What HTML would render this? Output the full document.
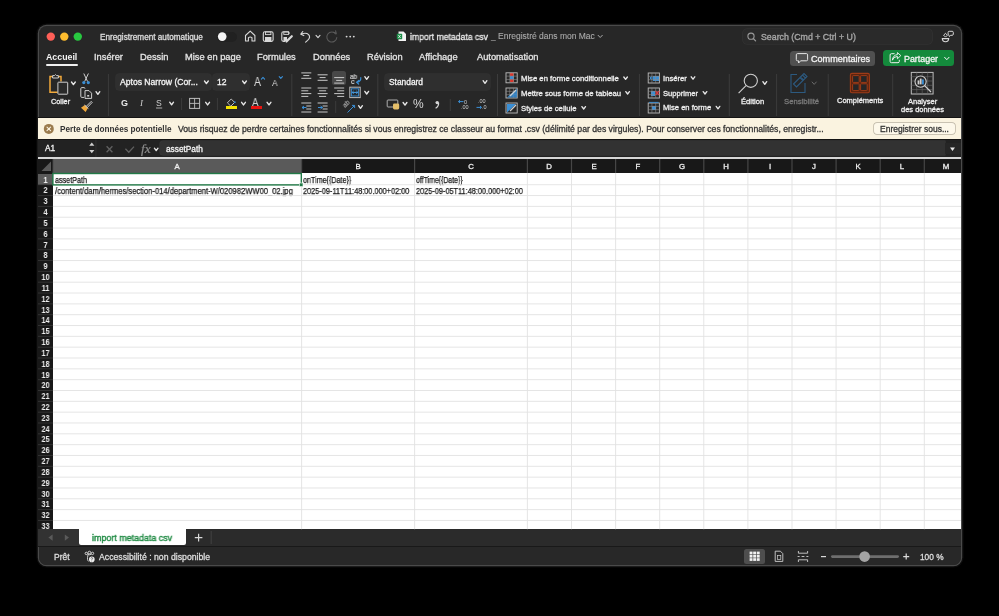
<!DOCTYPE html>
<html><head><meta charset="utf-8"><style>
html,body{margin:0;padding:0;background:#000;width:999px;height:616px;overflow:hidden;}
body{position:relative;font-family:"Liberation Sans", sans-serif;}
.t{position:absolute;white-space:nowrap;line-height:1;will-change:transform;}
.r{position:absolute;}
svg{position:absolute;left:0;top:0;}
</style></head><body>
<div class="r" style="left:38.6px;top:26px;width:922.2px;height:538.8px;background:#272727;border-radius:7.5px;box-shadow:0 0 0 1.2px #4a4a4a, 0 0 0 2.6px #0c0c0c;"></div>
<div class="t" style="left:100.00px;top:34.00px;font-size:8.2px;color:#dedede;font-weight:400;-webkit-text-stroke:0.3px #dedede;">Enregistrement automatique</div>
<div class="r" style="left:217px;top:31.6px;width:20px;height:10px;border-radius:5px;background:#212121"></div>
<div class="t" style="left:409.80px;top:33.00px;font-size:9.0px;color:#ececec;font-weight:400;transform:scaleX(0.9623689080814313);transform-origin:0 0;-webkit-text-stroke:0.3px #ececec;">import metadata csv</div>
<div class="t" style="left:490.50px;top:32.00px;font-size:8.5px;color:#aaaaaa;font-weight:400;">_</div>
<div class="t" style="left:498.00px;top:32.00px;font-size:8.5px;color:#ababab;font-weight:400;-webkit-text-stroke:0.1px #ababab;">Enregistré dans mon Mac</div>
<div class="r" style="left:743px;top:29px;width:189px;height:14.5px;border-radius:4px;background:#2a2a2a;box-shadow:0 0 0 0.6px #363636"></div>
<div class="t" style="left:761.00px;top:33.00px;font-size:8.8px;color:#a6a6a6;font-weight:400;-webkit-text-stroke:0.35px #a6a6a6;">Search (Cmd + Ctrl + U)</div>
<div class="t" style="left:46.00px;top:53.00px;font-size:8.8px;color:#f2f2f2;font-weight:700;">Accueil</div>
<div class="r" style="left:45.5px;top:64px;width:32.5px;height:2.2px;border-radius:1.1px;background:#f0f0f0"></div>
<div class="t" style="left:93.60px;top:53.00px;font-size:9.3px;color:#e4e4e4;font-weight:400;-webkit-text-stroke:0.3px #e4e4e4;">Insérer</div>
<div class="t" style="left:140.00px;top:53.00px;font-size:9.3px;color:#e4e4e4;font-weight:400;-webkit-text-stroke:0.3px #e4e4e4;">Dessin</div>
<div class="t" style="left:184.50px;top:53.00px;font-size:9.3px;color:#e4e4e4;font-weight:400;-webkit-text-stroke:0.3px #e4e4e4;">Mise en page</div>
<div class="t" style="left:257.20px;top:53.00px;font-size:9.3px;color:#e4e4e4;font-weight:400;-webkit-text-stroke:0.3px #e4e4e4;">Formules</div>
<div class="t" style="left:313.20px;top:53.00px;font-size:9.3px;color:#e4e4e4;font-weight:400;-webkit-text-stroke:0.3px #e4e4e4;">Données</div>
<div class="t" style="left:366.80px;top:53.00px;font-size:9.3px;color:#e4e4e4;font-weight:400;-webkit-text-stroke:0.3px #e4e4e4;">Révision</div>
<div class="t" style="left:418.70px;top:53.00px;font-size:9.3px;color:#e4e4e4;font-weight:400;-webkit-text-stroke:0.3px #e4e4e4;">Affichage</div>
<div class="t" style="left:477.30px;top:53.00px;font-size:9.3px;color:#e4e4e4;font-weight:400;-webkit-text-stroke:0.3px #e4e4e4;">Automatisation</div>
<div class="r" style="left:790px;top:50.5px;width:85.3px;height:15.5px;border-radius:3.5px;background:#505050"></div>
<div class="t" style="left:811.00px;top:55.00px;font-size:9.1px;color:#f4f4f4;font-weight:400;-webkit-text-stroke:0.3px #f4f4f4;">Commentaires</div>
<div class="r" style="left:883px;top:50.3px;width:71.4px;height:16px;border-radius:3.5px;background:#148a3c"></div>
<div class="t" style="left:903.90px;top:55.00px;font-size:8.9px;color:#f4f4f4;font-weight:400;-webkit-text-stroke:0.3px #f4f4f4;">Partager</div>
<div class="r" style="left:38px;top:116.6px;width:923px;height:1.8px;background:#141414;"></div>
<div class="t" style="left:51.00px;top:98.00px;font-size:7.3px;color:#efefef;font-weight:400;-webkit-text-stroke:0.3px #efefef;">Coller</div>
<div class="r" style="left:116px;top:73.7px;width:95px;height:16.5px;border-radius:3px;background:#2f2f2f;box-shadow:0 0 0 0.5px #363636"></div>
<div class="t" style="left:119.90px;top:78.00px;font-size:8.6px;color:#f4f4f4;font-weight:400;-webkit-text-stroke:0.3px #f4f4f4;">Aptos Narrow (Cor...</div>
<div class="r" style="left:213.4px;top:73.7px;width:35.8px;height:16.5px;border-radius:3px;background:#2f2f2f;box-shadow:0 0 0 0.5px #363636"></div>
<div class="t" style="left:216.70px;top:78.00px;font-size:8.6px;color:#f4f4f4;font-weight:400;-webkit-text-stroke:0.3px #f4f4f4;">12</div>
<div class="t" style="left:253.80px;top:76.00px;font-size:12.3px;color:#d8d8d8;font-weight:400;transform:scaleX(0.85);transform-origin:0 0;">A</div>
<div class="t" style="left:272.20px;top:79.00px;font-size:9.3px;color:#d8d8d8;font-weight:400;transform:scaleX(0.9);transform-origin:0 0;">A</div>
<div class="t" style="left:120.60px;top:99.00px;font-size:9px;color:#e8e8e8;font-weight:700;">G</div>
<div class="t" style="left:139.80px;top:99.00px;font-size:9px;color:#cfcfcf;font-weight:400;font-family:'Liberation Serif',serif;font-style:italic;">I</div>
<div class="t" style="left:156.30px;top:99.00px;font-size:8.6px;color:#cfcfcf;font-weight:400;">S</div>
<div class="r" style="left:225.8px;top:106.3px;width:11px;height:2.6px;background:#f5e400;"></div>
<div class="t" style="left:251.80px;top:97.00px;font-size:11.5px;color:#cfcfcf;font-weight:400;transform:scaleX(0.85);transform-origin:0 0;">A</div>
<div class="r" style="left:251.2px;top:106.3px;width:11px;height:2.6px;background:#e8130f;"></div>
<div class="r" style="left:332px;top:71px;width:14px;height:13.5px;border-radius:2.5px;background:#484848"></div>
<div class="t" style="left:350.40px;top:73.00px;font-size:7.2px;color:#cfcfcf;font-weight:400;transform:scaleX(0.9);transform-origin:0 0;-webkit-text-stroke:0.2px #cfcfcf;">ab</div>
<div class="t" style="left:350.60px;top:78.00px;font-size:7.2px;color:#cfcfcf;font-weight:400;-webkit-text-stroke:0.2px #cfcfcf;">c</div>
<div class="t" style="left:342.5px;top:101px;font-size:6.5px;color:#cfcfcf;transform:rotate(-45deg);transform-origin:50% 50%">ab</div>
<div class="r" style="left:385px;top:73.5px;width:105px;height:16.3px;border-radius:3px;background:#2f2f2f;box-shadow:0 0 0 0.5px #363636"></div>
<div class="t" style="left:389.00px;top:78.00px;font-size:8.4px;color:#f4f4f4;font-weight:400;-webkit-text-stroke:0.3px #f4f4f4;">Standard</div>
<div class="t" style="left:413.00px;top:98.00px;font-size:12px;color:#d8d8d8;font-weight:400;">%</div>
<div class="t" style="left:464.30px;top:100.00px;font-size:5.5px;color:#cfcfcf;font-weight:400;">0</div>
<div class="t" style="left:461.00px;top:105.00px;font-size:5.5px;color:#cfcfcf;font-weight:400;">.00</div>
<div class="t" style="left:478.00px;top:99.00px;font-size:5.5px;color:#cfcfcf;font-weight:400;">.00</div>
<div class="t" style="left:482.30px;top:105.00px;font-size:5.5px;color:#cfcfcf;font-weight:400;">.0</div>
<div class="r" style="left:509.6px;top:73.4px;width:4px;height:2.8px;background:#d9342b;"></div>
<div class="r" style="left:509.6px;top:79.4px;width:4px;height:2.8px;background:#d9342b;"></div>
<div class="r" style="left:509.6px;top:76.4px;width:4px;height:3px;background:#3a8fd6;"></div>
<div class="t" style="left:521.30px;top:75.00px;font-size:7.7px;color:#efefef;font-weight:400;-webkit-text-stroke:0.3px #efefef;">Mise en forme conditionnelle</div>
<div class="t" style="left:521.30px;top:90.00px;font-size:7.7px;color:#efefef;font-weight:400;-webkit-text-stroke:0.3px #efefef;">Mettre sous forme de tableau</div>
<div class="t" style="left:521.30px;top:105.00px;font-size:7.7px;color:#efefef;font-weight:400;-webkit-text-stroke:0.3px #efefef;">Styles de cellule</div>
<div class="r" style="left:653px;top:75.5px;width:6px;height:5px;background:#3a8fd6;"></div>
<div class="t" style="left:663.00px;top:75.00px;font-size:7.7px;color:#efefef;font-weight:400;-webkit-text-stroke:0.3px #efefef;">Insérer</div>
<div class="r" style="left:650.5px;top:91px;width:4.5px;height:4.5px;background:#3a8fd6;"></div>
<div class="t" style="left:663.00px;top:90.00px;font-size:7.6px;color:#efefef;font-weight:400;-webkit-text-stroke:0.3px #efefef;">Supprimer</div>
<div class="r" style="left:651.6px;top:106.2px;width:4.4px;height:3.8px;background:#3a8fd6;"></div>
<div class="t" style="left:663.00px;top:104.00px;font-size:7.6px;color:#efefef;font-weight:400;-webkit-text-stroke:0.3px #efefef;">Mise en forme</div>
<div class="t" style="left:740.60px;top:98.00px;font-size:7.6px;color:#efefef;font-weight:400;-webkit-text-stroke:0.3px #efefef;">Édition</div>
<div class="t" style="left:784.40px;top:98.00px;font-size:7.7px;color:#7a7a7a;font-weight:400;-webkit-text-stroke:0.3px #7a7a7a;">Sensibilité</div>
<div class="t" style="left:836.90px;top:97.00px;font-size:7.5px;color:#efefef;font-weight:400;-webkit-text-stroke:0.3px #efefef;">Compléments</div>
<div class="t" style="left:907.60px;top:98.00px;font-size:7.5px;color:#efefef;font-weight:400;-webkit-text-stroke:0.3px #efefef;">Analyser</div>
<div class="t" style="left:900.60px;top:106.00px;font-size:7.5px;color:#efefef;font-weight:400;-webkit-text-stroke:0.3px #efefef;">des données</div>
<div class="r" style="left:38px;top:118.4px;width:923px;height:20.8px;background:#faf3e0;"></div>
<div class="t" style="left:60.00px;top:126.00px;font-size:8.2px;color:#333333;font-weight:700;">Perte de données potentielle</div>
<div class="t" style="left:178.00px;top:125.00px;font-size:8.67px;color:#333333;font-weight:400;-webkit-text-stroke:0.3px #333333;">Vous risquez de perdre certaines fonctionnalités si vous enregistrez ce classeur au format .csv (délimité par des virgules). Pour conserver ces fonctionnalités, enregistr...</div>
<div class="r" style="left:873.5px;top:122.5px;width:81.5px;height:11.8px;border-radius:3px;background:#fdf8ea;box-shadow:0 0 0 0.7px #b9b2a2"></div>
<div class="t" style="left:880.20px;top:125.00px;font-size:8.5px;color:#333333;font-weight:400;-webkit-text-stroke:0.3px #333333;">Enregistrer sous...</div>
<div class="r" style="left:38px;top:139.2px;width:923px;height:18.2px;background:#222222;"></div>
<div class="r" style="left:38px;top:139.2px;width:923px;height:1.3px;background:#141414;"></div>
<div class="r" style="left:160.2px;top:141.4px;width:784.6px;height:14.1px;background:#323232;border-radius:3px 0 0 3px;box-shadow:0 0 0 0.5px #3a3a3a;"></div>
<div class="r" style="left:945.2px;top:143px;width:15.4px;height:11.3px;background:#262626;"></div>
<div class="t" style="left:45.00px;top:144.00px;font-size:8.3px;color:#f4f4f4;font-weight:400;-webkit-text-stroke:0.3px #f4f4f4;">A1</div>
<div class="t" style="left:140.60px;top:143.00px;font-size:12px;color:#8c8c8c;font-weight:400;font-family:'Liberation Serif',serif;font-style:italic;transform:scaleX(1.12);transform-origin:0 0;-webkit-text-stroke:0.2px #8c8c8c;">fx</div>
<div class="t" style="left:165.50px;top:145.00px;font-size:8.3px;color:#f4f4f4;font-weight:400;-webkit-text-stroke:0.3px #f4f4f4;">assetPath</div>
<div class="r" style="left:38px;top:156.9px;width:923px;height:2.0px;background:#d6d6d6;"></div>
<div class="r" style="left:38px;top:159px;width:923px;height:14px;background:#181818;"></div>
<div class="r" style="left:53px;top:159px;width:248.60000000000002px;height:14px;background:#5a5a5a;"></div>
<div class="r" style="left:53px;top:173px;width:908px;height:356.20000000000005px;background:#ffffff;"></div>
<div class="r" style="left:38px;top:173px;width:15px;height:356.20000000000005px;background:#181818;"></div>
<div class="r" style="left:38px;top:173.9px;width:15px;height:10.83px;background:#5a5a5a;"></div>
<div class="t" style="left:167.30px;width:20px;text-align:center;top:163.00px;font-size:7.8px;color:#f0f0f0;font-weight:400;-webkit-text-stroke:0.3px #f0f0f0">A</div>
<div class="t" style="left:348.10px;width:20px;text-align:center;top:163.00px;font-size:7.8px;color:#f0f0f0;font-weight:400;-webkit-text-stroke:0.3px #f0f0f0">B</div>
<div class="t" style="left:461.00px;width:20px;text-align:center;top:163.00px;font-size:7.8px;color:#f0f0f0;font-weight:400;-webkit-text-stroke:0.3px #f0f0f0">C</div>
<div class="t" style="left:539.45px;width:20px;text-align:center;top:163.00px;font-size:7.8px;color:#f0f0f0;font-weight:400;-webkit-text-stroke:0.3px #f0f0f0">D</div>
<div class="t" style="left:583.55px;width:20px;text-align:center;top:163.00px;font-size:7.8px;color:#f0f0f0;font-weight:400;-webkit-text-stroke:0.3px #f0f0f0">E</div>
<div class="t" style="left:627.65px;width:20px;text-align:center;top:163.00px;font-size:7.8px;color:#f0f0f0;font-weight:400;-webkit-text-stroke:0.3px #f0f0f0">F</div>
<div class="t" style="left:671.75px;width:20px;text-align:center;top:163.00px;font-size:7.8px;color:#f0f0f0;font-weight:400;-webkit-text-stroke:0.3px #f0f0f0">G</div>
<div class="t" style="left:715.85px;width:20px;text-align:center;top:163.00px;font-size:7.8px;color:#f0f0f0;font-weight:400;-webkit-text-stroke:0.3px #f0f0f0">H</div>
<div class="t" style="left:759.95px;width:20px;text-align:center;top:163.00px;font-size:7.8px;color:#f0f0f0;font-weight:400;-webkit-text-stroke:0.3px #f0f0f0">I</div>
<div class="t" style="left:804.05px;width:20px;text-align:center;top:163.00px;font-size:7.8px;color:#f0f0f0;font-weight:400;-webkit-text-stroke:0.3px #f0f0f0">J</div>
<div class="t" style="left:848.15px;width:20px;text-align:center;top:163.00px;font-size:7.8px;color:#f0f0f0;font-weight:400;-webkit-text-stroke:0.3px #f0f0f0">K</div>
<div class="t" style="left:892.25px;width:20px;text-align:center;top:163.00px;font-size:7.8px;color:#f0f0f0;font-weight:400;-webkit-text-stroke:0.3px #f0f0f0">L</div>
<div class="t" style="left:936.30px;width:20px;text-align:center;top:163.00px;font-size:7.8px;color:#f0f0f0;font-weight:400;-webkit-text-stroke:0.3px #f0f0f0">M</div>
<div class="t" style="left:38px;width:15px;text-align:center;top:176.56px;font-size:8.2px;color:#f0f0f0;font-weight:700;transform:scaleX(0.88);transform-origin:50% 0">1</div>
<div class="t" style="left:38px;width:15px;text-align:center;top:187.39px;font-size:8.2px;color:#f0f0f0;font-weight:700;transform:scaleX(0.88);transform-origin:50% 0">2</div>
<div class="t" style="left:38px;width:15px;text-align:center;top:198.22px;font-size:8.2px;color:#f0f0f0;font-weight:700;transform:scaleX(0.88);transform-origin:50% 0">3</div>
<div class="t" style="left:38px;width:15px;text-align:center;top:209.05px;font-size:8.2px;color:#f0f0f0;font-weight:700;transform:scaleX(0.88);transform-origin:50% 0">4</div>
<div class="t" style="left:38px;width:15px;text-align:center;top:219.88px;font-size:8.2px;color:#f0f0f0;font-weight:700;transform:scaleX(0.88);transform-origin:50% 0">5</div>
<div class="t" style="left:38px;width:15px;text-align:center;top:230.71px;font-size:8.2px;color:#f0f0f0;font-weight:700;transform:scaleX(0.88);transform-origin:50% 0">6</div>
<div class="t" style="left:38px;width:15px;text-align:center;top:241.54px;font-size:8.2px;color:#f0f0f0;font-weight:700;transform:scaleX(0.88);transform-origin:50% 0">7</div>
<div class="t" style="left:38px;width:15px;text-align:center;top:252.37px;font-size:8.2px;color:#f0f0f0;font-weight:700;transform:scaleX(0.88);transform-origin:50% 0">8</div>
<div class="t" style="left:38px;width:15px;text-align:center;top:263.20px;font-size:8.2px;color:#f0f0f0;font-weight:700;transform:scaleX(0.88);transform-origin:50% 0">9</div>
<div class="t" style="left:38px;width:15px;text-align:center;top:274.03px;font-size:8.2px;color:#f0f0f0;font-weight:700;transform:scaleX(0.88);transform-origin:50% 0">10</div>
<div class="t" style="left:38px;width:15px;text-align:center;top:284.86px;font-size:8.2px;color:#f0f0f0;font-weight:700;transform:scaleX(0.88);transform-origin:50% 0">11</div>
<div class="t" style="left:38px;width:15px;text-align:center;top:295.69px;font-size:8.2px;color:#f0f0f0;font-weight:700;transform:scaleX(0.88);transform-origin:50% 0">12</div>
<div class="t" style="left:38px;width:15px;text-align:center;top:306.52px;font-size:8.2px;color:#f0f0f0;font-weight:700;transform:scaleX(0.88);transform-origin:50% 0">13</div>
<div class="t" style="left:38px;width:15px;text-align:center;top:317.35px;font-size:8.2px;color:#f0f0f0;font-weight:700;transform:scaleX(0.88);transform-origin:50% 0">14</div>
<div class="t" style="left:38px;width:15px;text-align:center;top:328.18px;font-size:8.2px;color:#f0f0f0;font-weight:700;transform:scaleX(0.88);transform-origin:50% 0">15</div>
<div class="t" style="left:38px;width:15px;text-align:center;top:339.01px;font-size:8.2px;color:#f0f0f0;font-weight:700;transform:scaleX(0.88);transform-origin:50% 0">16</div>
<div class="t" style="left:38px;width:15px;text-align:center;top:349.84px;font-size:8.2px;color:#f0f0f0;font-weight:700;transform:scaleX(0.88);transform-origin:50% 0">17</div>
<div class="t" style="left:38px;width:15px;text-align:center;top:360.67px;font-size:8.2px;color:#f0f0f0;font-weight:700;transform:scaleX(0.88);transform-origin:50% 0">18</div>
<div class="t" style="left:38px;width:15px;text-align:center;top:371.50px;font-size:8.2px;color:#f0f0f0;font-weight:700;transform:scaleX(0.88);transform-origin:50% 0">19</div>
<div class="t" style="left:38px;width:15px;text-align:center;top:382.33px;font-size:8.2px;color:#f0f0f0;font-weight:700;transform:scaleX(0.88);transform-origin:50% 0">20</div>
<div class="t" style="left:38px;width:15px;text-align:center;top:393.16px;font-size:8.2px;color:#f0f0f0;font-weight:700;transform:scaleX(0.88);transform-origin:50% 0">21</div>
<div class="t" style="left:38px;width:15px;text-align:center;top:403.99px;font-size:8.2px;color:#f0f0f0;font-weight:700;transform:scaleX(0.88);transform-origin:50% 0">22</div>
<div class="t" style="left:38px;width:15px;text-align:center;top:414.82px;font-size:8.2px;color:#f0f0f0;font-weight:700;transform:scaleX(0.88);transform-origin:50% 0">23</div>
<div class="t" style="left:38px;width:15px;text-align:center;top:425.65px;font-size:8.2px;color:#f0f0f0;font-weight:700;transform:scaleX(0.88);transform-origin:50% 0">24</div>
<div class="t" style="left:38px;width:15px;text-align:center;top:436.48px;font-size:8.2px;color:#f0f0f0;font-weight:700;transform:scaleX(0.88);transform-origin:50% 0">25</div>
<div class="t" style="left:38px;width:15px;text-align:center;top:447.31px;font-size:8.2px;color:#f0f0f0;font-weight:700;transform:scaleX(0.88);transform-origin:50% 0">26</div>
<div class="t" style="left:38px;width:15px;text-align:center;top:458.14px;font-size:8.2px;color:#f0f0f0;font-weight:700;transform:scaleX(0.88);transform-origin:50% 0">27</div>
<div class="t" style="left:38px;width:15px;text-align:center;top:468.97px;font-size:8.2px;color:#f0f0f0;font-weight:700;transform:scaleX(0.88);transform-origin:50% 0">28</div>
<div class="t" style="left:38px;width:15px;text-align:center;top:479.80px;font-size:8.2px;color:#f0f0f0;font-weight:700;transform:scaleX(0.88);transform-origin:50% 0">29</div>
<div class="t" style="left:38px;width:15px;text-align:center;top:490.63px;font-size:8.2px;color:#f0f0f0;font-weight:700;transform:scaleX(0.88);transform-origin:50% 0">30</div>
<div class="t" style="left:38px;width:15px;text-align:center;top:501.46px;font-size:8.2px;color:#f0f0f0;font-weight:700;transform:scaleX(0.88);transform-origin:50% 0">31</div>
<div class="t" style="left:38px;width:15px;text-align:center;top:512.29px;font-size:8.2px;color:#f0f0f0;font-weight:700;transform:scaleX(0.88);transform-origin:50% 0">32</div>
<div class="t" style="left:38px;width:15px;text-align:center;top:523.12px;font-size:8.2px;color:#f0f0f0;font-weight:700;transform:scaleX(0.88);transform-origin:50% 0">33</div>
<div class="t" style="left:55.20px;top:176.00px;font-size:8.6px;color:#151515;font-weight:400;transform:scaleX(0.8366013071895425);transform-origin:0 0;-webkit-text-stroke:0.25px #151515;">assetPath</div>
<div class="t" style="left:303.00px;top:176.00px;font-size:8.6px;color:#151515;font-weight:400;transform:scaleX(0.8324715615305066);transform-origin:0 0;-webkit-text-stroke:0.25px #151515;">onTime{{Date}}</div>
<div class="t" style="left:416.00px;top:176.00px;font-size:8.6px;color:#151515;font-weight:400;transform:scaleX(0.8062913907284769);transform-origin:0 0;-webkit-text-stroke:0.25px #151515;">offTime{{Date}}</div>
<div class="t" style="left:55.20px;top:187.00px;font-size:8.6px;color:#151515;font-weight:400;transform:scaleX(0.8827893175074183);transform-origin:0 0;-webkit-text-stroke:0.25px #151515;">/content/dam/hermes/section-014/department-W/020982WW00_02.jpg</div>
<div class="t" style="left:303.00px;top:187.00px;font-size:8.6px;color:#151515;font-weight:400;transform:scaleX(0.8532477947072975);transform-origin:0 0;-webkit-text-stroke:0.25px #151515;">2025-09-11T11:48:00.000+02:00</div>
<div class="t" style="left:416.00px;top:187.00px;font-size:8.6px;color:#151515;font-weight:400;transform:scaleX(0.8532477947072975);transform-origin:0 0;-webkit-text-stroke:0.25px #151515;">2025-09-05T11:48:00.000+02:00</div>
<div class="r" style="left:38px;top:529.2px;width:923px;height:16.799999999999955px;background:#2b2b2b;"></div>
<div class="r" style="left:38px;top:529.2px;width:41px;height:16.799999999999955px;background:#323232;"></div>
<div class="r" style="left:79px;top:529.2px;width:106.5px;height:15.399999999999977px;background:#ffffff;border-radius:0 0 2px 2px;"></div>
<div class="t" style="left:92.00px;top:534.00px;font-size:9.0px;color:#1f8a43;font-weight:400;transform:scaleX(0.9895126465144973);transform-origin:0 0;-webkit-text-stroke:0.4px #1f8a43;">import metadata csv</div>
<div class="r" style="left:38.6px;top:546px;width:922.2px;height:18.8px;background:#282828;border-radius:0 0 7.5px 7.5px;"></div>
<div class="r" style="left:38px;top:545.8px;width:923px;height:1.6px;background:#191919;"></div>
<div class="t" style="left:54.40px;top:553.00px;font-size:8.45px;color:#dedede;font-weight:400;-webkit-text-stroke:0.3px #dedede;">Prêt</div>
<div class="t" style="left:99.00px;top:553.00px;font-size:8.7px;color:#dedede;font-weight:400;-webkit-text-stroke:0.3px #dedede;">Accessibilité : non disponible</div>
<div class="r" style="left:744px;top:548.8px;width:21px;height:15px;border-radius:2.5px;background:#4e4e4e"></div>
<div class="t" style="left:920.20px;top:553.00px;font-size:8.3px;color:#dedede;font-weight:400;-webkit-text-stroke:0.3px #dedede;">100 %</div>
<svg width="999" height="616" viewBox="0 0 999 616">
<circle cx="50.8" cy="36.6" r="4.2" fill="#ff5f57"/>
<circle cx="64.3" cy="36.6" r="4.2" fill="#febc2e"/>
<circle cx="77.8" cy="36.6" r="4.2" fill="#28c840"/>
<circle cx="222.2" cy="36.6" r="4.3" fill="#f4f4f4"/>
<path d="M245.5,41 L245.5,35.5 L250.2,31.2 L254.9,35.5 L254.9,41 L252,41 L252,37.6 Q250.2,36.4 248.4,37.6 L248.4,41 Z" fill="none" stroke="#d8d8d8" stroke-width="1.1" stroke-linejoin="round"/>
<rect x="263.3" y="31.8" width="9.8" height="9.6" rx="1.6" fill="none" stroke="#d8d8d8" stroke-width="1.1"/>
<rect x="265.5" y="32" width="5.4" height="2.6" fill="none" stroke="#d8d8d8" stroke-width="0.9"/>
<rect x="265" y="37" width="6.4" height="4.2" fill="#d8d8d8"/>
<path d="M289.5,33.6 L288.4,31.8 L283.4,31.8 Q281.8,31.8 281.8,33.4 L281.8,39.8 Q281.8,41.4 283.4,41.4 L285.2,41.4" fill="none" stroke="#d8d8d8" stroke-width="1.1"/>
<rect x="283.8" y="32" width="4.8" height="2.4" fill="none" stroke="#d8d8d8" stroke-width="0.9"/>
<rect x="283.5" y="37" width="3.5" height="4.2" fill="#d8d8d8"/>
<path d="M286.5,41.5 L291.8,36.2" stroke="#d8d8d8" stroke-width="2.2" stroke-linecap="round"/>
<path d="M302.8,31.5 L300.8,34.2 L303.8,35.6 M301,34.2 Q306,32.2 308.6,34.6 Q311,37.2 307.6,40.4 L305.6,42.2" fill="none" stroke="#d8d8d8" stroke-width="1.1" stroke-linecap="round" stroke-linejoin="round"/>
<path d="M316.0,35.4 L318,37.6 L320.0,35.4" fill="none" stroke="#d8d8d8" stroke-width="1.1" stroke-linecap="round" stroke-linejoin="round"/>
<path d="M335.8,34 A5,5 0 1 0 336.8,37.5" fill="none" stroke="#5a5a5a" stroke-width="1.1" stroke-linecap="round"/>
<path d="M333.5,32.2 L336.3,33.6 L335.6,30.8" fill="none" stroke="#5a5a5a" stroke-width="1.1" stroke-linecap="round" stroke-linejoin="round"/>
<circle cx="346.6" cy="36.6" r="0.95" fill="#d8d8d8"/>
<circle cx="350.2" cy="36.6" r="0.95" fill="#d8d8d8"/>
<circle cx="353.8" cy="36.6" r="0.95" fill="#d8d8d8"/>
<path d="M398.5,31.5 L403.5,31.5 L406,34 L406,41 L398.5,41 Z" fill="#f4f4f4"/>
<rect x="396.8" y="33.8" width="5.4" height="5.4" rx="0.6" fill="#1f8f4a"/>
<path d="M398.3,35 L400.7,38 M400.7,35 L398.3,38" stroke="#fff" stroke-width="0.7"/>
<path d="M598.1,35.3 L600.2,37.5 L602.3000000000001,35.3" fill="none" stroke="#aaaaaa" stroke-width="1.0" stroke-linecap="round" stroke-linejoin="round"/>
<circle cx="751" cy="36.2" r="3.1" fill="none" stroke="#9a9a9a" stroke-width="1.1"/>
<path d="M753.3,38.5 L755.6,40.8" stroke="#9a9a9a" stroke-width="1.2" stroke-linecap="round"/>
<path d="M942.3,38.6 L948.7,38.6 Q948.7,41.7 945.5,41.7 Q942.3,41.7 942.3,38.6 Z" fill="none" stroke="#d8d8d8" stroke-width="1.1"/>
<path d="M945.5,33.3 L947.4,35.2 L945.5,37.1 L943.6,35.2 Z" fill="none" stroke="#d8d8d8" stroke-width="1"/>
<path d="M949.2,31.3 L952.2,31.3 Q953.3,31.3 953.3,32.4 L953.3,34.2 Q953.3,35.3 952.2,35.3 L950.6,35.3 L949.4,36.6 L949,35.2 Q948.1,35 948.1,34.2 L948.1,32.4 Q948.1,31.3 949.2,31.3 Z" fill="none" stroke="#d8d8d8" stroke-width="1"/>
<path d="M797.5,53.6 L806.4,53.6 Q807.6,53.6 807.6,54.8 L807.6,59.6 Q807.6,60.8 806.4,60.8 L800.6,60.8 L798.6,63 L798.6,60.8 L797.5,60.8 Q796.3,60.8 796.3,59.6 L796.3,54.8 Q796.3,53.6 797.5,53.6 Z" fill="none" stroke="#e6e6e6" stroke-width="1"/>
<path d="M894.6,53.7 L891.4,53.7 Q890.1,53.7 890.1,55 L890.1,61.4 Q890.1,62.7 891.4,62.7 L898,62.7 Q899.3,62.7 899.3,61.4 L899.3,59.8" fill="none" stroke="#f2f2f2" stroke-width="1"/>
<path d="M892.4,60.2 Q893.2,56.8 897.4,56.4 L897.4,58.8 L900.8,55.6 L897.4,52.6 L897.4,54.6 Q892.8,55.2 892.4,60.2 Z" fill="none" stroke="#f2f2f2" stroke-width="0.95" stroke-linejoin="round"/>
<path d="M944.5999999999999,57.3 L946.8,59.7 L949.0,57.3" fill="none" stroke="#f4f4f4" stroke-width="1.0" stroke-linecap="round" stroke-linejoin="round"/>
<line x1="108.4" y1="74" x2="108.4" y2="116" stroke="#3c3c3c" stroke-width="1"/>
<line x1="291.8" y1="74" x2="291.8" y2="116" stroke="#3c3c3c" stroke-width="1"/>
<line x1="377.8" y1="74" x2="377.8" y2="116" stroke="#3c3c3c" stroke-width="1"/>
<line x1="497.5" y1="74" x2="497.5" y2="116" stroke="#3c3c3c" stroke-width="1"/>
<line x1="639.4" y1="74" x2="639.4" y2="116" stroke="#3c3c3c" stroke-width="1"/>
<line x1="729.3" y1="74" x2="729.3" y2="116" stroke="#3c3c3c" stroke-width="1"/>
<line x1="776.6" y1="74" x2="776.6" y2="116" stroke="#3c3c3c" stroke-width="1"/>
<line x1="828.2" y1="74" x2="828.2" y2="116" stroke="#3c3c3c" stroke-width="1"/>
<line x1="892.7" y1="74" x2="892.7" y2="116" stroke="#3c3c3c" stroke-width="1"/>
<path d="M52.5,76.5 L50,76.5 L50,92.3 L57.6,92.3 M61,81.5 L61,76.5 L58.6,76.5" fill="none" stroke="#f2a93b" stroke-width="1.5"/>
<path d="M52.6,78 L52.6,75.6 L54.4,75.6 Q55.5,73.6 56.6,75.6 L58.4,75.6 L58.4,78 Z" fill="none" stroke="#cfcfcf" stroke-width="1"/>
<rect x="57.9" y="82.2" width="9.8" height="12" rx="0.6" fill="#2a2a2a" stroke="#cfcfcf" stroke-width="1"/>
<path d="M71.5,82.0 L73.4,84.6 L75.30000000000001,82.0" fill="none" stroke="#e6e6e6" stroke-width="1.4" stroke-linecap="round" stroke-linejoin="round"/>
<path d="M83.8,73.5 L87.6,81.6 M88.4,73.5 L84.6,81.6" stroke="#cfcfcf" stroke-width="1"/>
<circle cx="83.8" cy="82.6" r="1.6" fill="#3a8fd6"/><circle cx="88.3" cy="82.6" r="1.6" fill="#3a8fd6"/>
<path d="M84,97.4 L81.8,97.4 Q80.8,97.4 80.8,96.4 L80.8,88.6 Q80.8,87.6 81.8,87.6 L84,87.6 Q85,87.6 85,88.6" fill="none" stroke="#cfcfcf" stroke-width="1"/>
<path d="M85,90.6 L89,90.6 L91.6,93.2 L91.6,98.4 L85,98.4 Z" fill="none" stroke="#cfcfcf" stroke-width="1"/>
<rect x="87.2" y="95" width="2" height="1.6" fill="#cfcfcf"/>
<path d="M96.0,91.7 L97.9,94.3 L99.80000000000001,91.7" fill="none" stroke="#e6e6e6" stroke-width="1.4" stroke-linecap="round" stroke-linejoin="round"/>
<path d="M81,107.8 L85.6,112 L88,108 L84.8,105 Z" fill="#f2a93b"/>
<path d="M84.6,105 L88.4,108.6 M86.2,106.4 L91.2,101.4 L92.2,102.4 L87.4,107.4" fill="none" stroke="#cfcfcf" stroke-width="1"/>
<path d="M204.5,81.0 L206.4,83.6 L208.3,81.0" fill="none" stroke="#e6e6e6" stroke-width="1.4" stroke-linecap="round" stroke-linejoin="round"/>
<path d="M242.6,81.0 L244.5,83.6 L246.4,81.0" fill="none" stroke="#e6e6e6" stroke-width="1.4" stroke-linecap="round" stroke-linejoin="round"/>
<path d="M261.4,79.2 L263,77.4 L264.6,79.2" fill="none" stroke="#3a8fd6" stroke-width="1.1" stroke-linecap="round" stroke-linejoin="round"/>
<path d="M279.2,76.6 L280.8,78.4 L282.4,76.6" fill="none" stroke="#3a8fd6" stroke-width="1.1" stroke-linecap="round" stroke-linejoin="round"/>
<line x1="156" y1="108" x2="162.2" y2="108" stroke="#cfcfcf" stroke-width="0.8"/>
<path d="M169.7,102.2 L171.6,104.8 L173.5,102.2" fill="none" stroke="#e6e6e6" stroke-width="1.4" stroke-linecap="round" stroke-linejoin="round"/>
<line x1="181.6" y1="98" x2="181.6" y2="110" stroke="#3c3c3c" stroke-width="1"/>
<rect x="189.6" y="98.4" width="10" height="10" fill="none" stroke="#bdbdbd" stroke-width="1"/>
<path d="M194.6,98.4 L194.6,108.4 M189.6,103.4 L199.6,103.4" stroke="#bdbdbd" stroke-width="0.9"/>
<path d="M205.7,102.3 L207.6,104.89999999999999 L209.5,102.3" fill="none" stroke="#e6e6e6" stroke-width="1.4" stroke-linecap="round" stroke-linejoin="round"/>
<line x1="217.4" y1="98" x2="217.4" y2="110" stroke="#3c3c3c" stroke-width="1"/>
<path d="M227.4,102.8 L231.2,99 L234.6,102.4 L230.8,106.2 Z" fill="none" stroke="#cfcfcf" stroke-width="0.9"/>
<circle cx="234.8" cy="102.2" r="0.9" fill="#3a8fd6"/>
<path d="M241.6,102.3 L243.5,104.89999999999999 L245.4,102.3" fill="none" stroke="#e6e6e6" stroke-width="1.4" stroke-linecap="round" stroke-linejoin="round"/>
<path d="M267.1,102.3 L269,104.89999999999999 L270.9,102.3" fill="none" stroke="#e6e6e6" stroke-width="1.4" stroke-linecap="round" stroke-linejoin="round"/>
<line x1="301.3" y1="72.9" x2="311.3" y2="72.9" stroke="#c8c8c8" stroke-width="1"/>
<line x1="303.3" y1="75.6" x2="309.3" y2="75.6" stroke="#c8c8c8" stroke-width="1"/>
<line x1="301.3" y1="78.3" x2="311.3" y2="78.3" stroke="#c8c8c8" stroke-width="1"/>
<line x1="317.6" y1="74.8" x2="327.6" y2="74.8" stroke="#c8c8c8" stroke-width="1"/>
<line x1="319.6" y1="77.6" x2="325.6" y2="77.6" stroke="#c8c8c8" stroke-width="1"/>
<line x1="317.6" y1="80.3" x2="327.6" y2="80.3" stroke="#c8c8c8" stroke-width="1"/>
<line x1="334.2" y1="77.6" x2="344.2" y2="77.6" stroke="#c8c8c8" stroke-width="1"/>
<line x1="336.2" y1="80.4" x2="342.2" y2="80.4" stroke="#c8c8c8" stroke-width="1"/>
<line x1="334.2" y1="83.1" x2="344.2" y2="83.1" stroke="#c8c8c8" stroke-width="1"/>
<path d="M360.8,77.6 Q361,81.6 357.2,82.2 M358.8,80.4 L356.6,82.3 L358.6,84" fill="none" stroke="#3a8fd6" stroke-width="1.2" stroke-linecap="round"/>
<path d="M364.8,76.7 L366.7,79.3 L368.59999999999997,76.7" fill="none" stroke="#e6e6e6" stroke-width="1.4" stroke-linecap="round" stroke-linejoin="round"/>
<line x1="301.3" y1="88" x2="311.3" y2="88" stroke="#c8c8c8" stroke-width="1"/>
<line x1="301.3" y1="90.8" x2="308.3" y2="90.8" stroke="#c8c8c8" stroke-width="1"/>
<line x1="301.3" y1="93.6" x2="311.3" y2="93.6" stroke="#c8c8c8" stroke-width="1"/>
<line x1="301.3" y1="96.4" x2="308.3" y2="96.4" stroke="#c8c8c8" stroke-width="1"/>
<line x1="317.6" y1="88" x2="327.6" y2="88" stroke="#c8c8c8" stroke-width="1"/>
<line x1="319.1" y1="90.8" x2="326.1" y2="90.8" stroke="#c8c8c8" stroke-width="1"/>
<line x1="317.6" y1="93.6" x2="327.6" y2="93.6" stroke="#c8c8c8" stroke-width="1"/>
<line x1="319.1" y1="96.4" x2="326.1" y2="96.4" stroke="#c8c8c8" stroke-width="1"/>
<line x1="334.2" y1="88" x2="344.2" y2="88" stroke="#c8c8c8" stroke-width="1"/>
<line x1="337.2" y1="90.8" x2="344.2" y2="90.8" stroke="#c8c8c8" stroke-width="1"/>
<line x1="334.2" y1="93.6" x2="344.2" y2="93.6" stroke="#c8c8c8" stroke-width="1"/>
<line x1="337.2" y1="96.4" x2="344.2" y2="96.4" stroke="#c8c8c8" stroke-width="1"/>
<rect x="349.8" y="87.2" width="10.4" height="10.4" fill="none" stroke="#bdbdbd" stroke-width="1"/>
<rect x="351.4" y="88.8" width="7.2" height="7.2" fill="#232a30" stroke="#3a8fd6" stroke-width="0.9"/>
<path d="M352.2,92.4 L357.8,92.4 M353.6,91 L352.2,92.4 L353.6,93.8 M356.4,91 L357.8,92.4 L356.4,93.8" fill="none" stroke="#4aa0e6" stroke-width="1"/>
<path d="M364.8,91.4 L366.7,94.0 L368.59999999999997,91.4" fill="none" stroke="#e6e6e6" stroke-width="1.4" stroke-linecap="round" stroke-linejoin="round"/>
<line x1="301.3" y1="103" x2="311.3" y2="103" stroke="#c8c8c8" stroke-width="1"/>
<line x1="301.3" y1="112" x2="311.3" y2="112" stroke="#c8c8c8" stroke-width="1"/>
<line x1="306.3" y1="106" x2="311.3" y2="106" stroke="#c8c8c8" stroke-width="1"/>
<line x1="306.3" y1="109" x2="311.3" y2="109" stroke="#c8c8c8" stroke-width="1"/>
<path d="M302,107.5 L306.5,107.5 M304,106 L302,107.5 L304,109" fill="none" stroke="#3a8fd6" stroke-width="1"/>
<line x1="317.6" y1="103" x2="327.6" y2="103" stroke="#c8c8c8" stroke-width="1"/>
<line x1="317.6" y1="112" x2="327.6" y2="112" stroke="#c8c8c8" stroke-width="1"/>
<line x1="322.6" y1="106" x2="327.6" y2="106" stroke="#c8c8c8" stroke-width="1"/>
<line x1="322.6" y1="109" x2="327.6" y2="109" stroke="#c8c8c8" stroke-width="1"/>
<path d="M318,107.5 L322.5,107.5 M320.5,106 L322.5,107.5 L320.5,109" fill="none" stroke="#3a8fd6" stroke-width="1"/>
<line x1="335.7" y1="101" x2="335.7" y2="113" stroke="#3c3c3c" stroke-width="1"/>
<path d="M347.5,112.5 L354.5,105.5 M352,105.4 L354.6,105.4 L354.6,108" fill="none" stroke="#3a8fd6" stroke-width="1"/>
<path d="M358.6,105.7 L360.5,108.3 L362.4,105.7" fill="none" stroke="#e6e6e6" stroke-width="1.4" stroke-linecap="round" stroke-linejoin="round"/>
<path d="M483.1,80.7 L485,83.3 L486.9,80.7" fill="none" stroke="#e6e6e6" stroke-width="1.4" stroke-linecap="round" stroke-linejoin="round"/>
<rect x="387.2" y="100" width="10.6" height="7" rx="0.8" fill="none" stroke="#bdbdbd" stroke-width="0.9"/>
<rect x="393" y="103.4" width="6.2" height="6" rx="1.4" fill="#e6c06a"/>
<path d="M403.1,102.5 L405,105.1 L406.9,102.5" fill="none" stroke="#e6e6e6" stroke-width="1.4" stroke-linecap="round" stroke-linejoin="round"/>
<circle cx="437.2" cy="102.6" r="1.7" fill="#d8d8d8"/><path d="M438.6,102.8 Q438.8,106.6 435.6,108.2" fill="none" stroke="#d8d8d8" stroke-width="1.2"/>
<line x1="450.3" y1="99" x2="450.3" y2="111" stroke="#3c3c3c" stroke-width="1"/>
<path d="M458.5,101.6 L463.5,101.6 M460,100.2 L458.5,101.6 L460,103" fill="none" stroke="#3a8fd6" stroke-width="1"/>
<path d="M476.5,107.4 L481.5,107.4 M480,106 L481.5,107.4 L480,108.8" fill="none" stroke="#3a8fd6" stroke-width="1"/>
<rect x="506" y="72.8" width="11.2" height="10" fill="none" stroke="#bdbdbd" stroke-width="0.9"/>
<line x1="509.73333333333335" y1="72.8" x2="509.73333333333335" y2="82.8" stroke="#8a8a8a" stroke-width="0.6"/>
<line x1="506" y1="76.13333333333333" x2="517.2" y2="76.13333333333333" stroke="#8a8a8a" stroke-width="0.6"/>
<line x1="513.4666666666667" y1="72.8" x2="513.4666666666667" y2="82.8" stroke="#8a8a8a" stroke-width="0.6"/>
<line x1="506" y1="79.46666666666667" x2="517.2" y2="79.46666666666667" stroke="#8a8a8a" stroke-width="0.6"/>
<path d="M623.8000000000001,77.0 L625.6,79.4 L627.4,77.0" fill="none" stroke="#e6e6e6" stroke-width="1.35" stroke-linecap="round" stroke-linejoin="round"/>
<rect x="506" y="88" width="11.2" height="10" fill="none" stroke="#bdbdbd" stroke-width="0.9"/>
<line x1="509.73333333333335" y1="88" x2="509.73333333333335" y2="98" stroke="#8a8a8a" stroke-width="0.6"/>
<line x1="506" y1="91.33333333333333" x2="517.2" y2="91.33333333333333" stroke="#8a8a8a" stroke-width="0.6"/>
<line x1="513.4666666666667" y1="88" x2="513.4666666666667" y2="98" stroke="#8a8a8a" stroke-width="0.6"/>
<line x1="506" y1="94.66666666666667" x2="517.2" y2="94.66666666666667" stroke="#8a8a8a" stroke-width="0.6"/>
<path d="M507,97.5 L517,88.5 L517,97.5 Z" fill="#3a8fd6" opacity="0.85"/>
<path d="M510,96 L516,90" stroke="#cfcfcf" stroke-width="1.2"/>
<path d="M625.8000000000001,91.6 L627.6,94.0 L629.4,91.6" fill="none" stroke="#e6e6e6" stroke-width="1.35" stroke-linecap="round" stroke-linejoin="round"/>
<rect x="506" y="103" width="11.2" height="10" fill="none" stroke="#bdbdbd" stroke-width="0.9"/>
<path d="M507,112.5 L507,104 L516,104 Z" fill="#3a8fd6"/>
<path d="M510,111 L516,105" stroke="#cfcfcf" stroke-width="1.2"/>
<path d="M581.9000000000001,106.6 L583.7,109.0 L585.5,106.6" fill="none" stroke="#e6e6e6" stroke-width="1.35" stroke-linecap="round" stroke-linejoin="round"/>
<rect x="648.2" y="73" width="11.2" height="10" fill="none" stroke="#bdbdbd" stroke-width="0.9"/>
<line x1="651.9333333333334" y1="73" x2="651.9333333333334" y2="83" stroke="#8a8a8a" stroke-width="0.6"/>
<line x1="648.2" y1="76.33333333333333" x2="659.4000000000001" y2="76.33333333333333" stroke="#8a8a8a" stroke-width="0.6"/>
<line x1="655.6666666666667" y1="73" x2="655.6666666666667" y2="83" stroke="#8a8a8a" stroke-width="0.6"/>
<line x1="648.2" y1="79.66666666666667" x2="659.4000000000001" y2="79.66666666666667" stroke="#8a8a8a" stroke-width="0.6"/>
<path d="M650,78 L654,78 M651.5,76.5 L650,78 L651.5,79.5" fill="none" stroke="#3a8fd6" stroke-width="1"/>
<path d="M691.2,76.8 L693,79.2 L694.8,76.8" fill="none" stroke="#e6e6e6" stroke-width="1.35" stroke-linecap="round" stroke-linejoin="round"/>
<rect x="648.2" y="88" width="11.2" height="10" fill="none" stroke="#bdbdbd" stroke-width="0.9"/>
<line x1="651.9333333333334" y1="88" x2="651.9333333333334" y2="98" stroke="#8a8a8a" stroke-width="0.6"/>
<line x1="648.2" y1="91.33333333333333" x2="659.4000000000001" y2="91.33333333333333" stroke="#8a8a8a" stroke-width="0.6"/>
<line x1="655.6666666666667" y1="88" x2="655.6666666666667" y2="98" stroke="#8a8a8a" stroke-width="0.6"/>
<line x1="648.2" y1="94.66666666666667" x2="659.4000000000001" y2="94.66666666666667" stroke="#8a8a8a" stroke-width="0.6"/>
<path d="M655.6,91.2 L659,94.8 M659,91.2 L655.6,94.8" stroke="#e0393e" stroke-width="1.1"/>
<path d="M703.2,91.6 L705,94.0 L706.8,91.6" fill="none" stroke="#e6e6e6" stroke-width="1.35" stroke-linecap="round" stroke-linejoin="round"/>
<rect x="648.2" y="103" width="11.2" height="10" fill="none" stroke="#bdbdbd" stroke-width="0.9"/>
<line x1="651.9333333333334" y1="103" x2="651.9333333333334" y2="113" stroke="#8a8a8a" stroke-width="0.6"/>
<line x1="648.2" y1="106.33333333333333" x2="659.4000000000001" y2="106.33333333333333" stroke="#8a8a8a" stroke-width="0.6"/>
<line x1="655.6666666666667" y1="103" x2="655.6666666666667" y2="113" stroke="#8a8a8a" stroke-width="0.6"/>
<line x1="648.2" y1="109.66666666666667" x2="659.4000000000001" y2="109.66666666666667" stroke="#8a8a8a" stroke-width="0.6"/>
<line x1="649" y1="102.4" x2="658.6" y2="102.4" stroke="#3a8fd6" stroke-width="0.9"/>
<path d="M716.2,106.39999999999999 L718,108.8 L719.8,106.39999999999999" fill="none" stroke="#e6e6e6" stroke-width="1.35" stroke-linecap="round" stroke-linejoin="round"/>
<circle cx="750.8" cy="80.8" r="6.6" fill="none" stroke="#cfcfcf" stroke-width="1.1"/>
<line x1="746" y1="85.6" x2="738.6" y2="93.2" stroke="#cfcfcf" stroke-width="1.1"/>
<path d="M762.9,81.7 L764.8,84.3 L766.6999999999999,81.7" fill="none" stroke="#e6e6e6" stroke-width="1.4" stroke-linecap="round" stroke-linejoin="round"/>
<path d="M797,74.5 L791,74.5 L791,92.5 L805,92.5 L805,83" fill="none" stroke="#2c5a80" stroke-width="1.1"/>
<path d="M793.5,84 L800,77.5 L803,80.5 L796.5,87 Z" fill="none" stroke="#2c5a80" stroke-width="1.1"/>
<path d="M800.5,77 L802.5,75 L805.5,78 L803.5,80 Z M802.5,75 L804,73.5 L807,76.5 L805.5,78" fill="none" stroke="#2c5a80" stroke-width="1.1"/>
<path d="M812.1,82.0 L814.2,84.4 L816.3000000000001,82.0" fill="none" stroke="#6a6a6a" stroke-width="1.0" stroke-linecap="round" stroke-linejoin="round"/>
<rect x="850.4" y="73.4" width="19" height="19.4" rx="1.5" fill="#5a2410" stroke="#9e3b17" stroke-width="1.1"/>
<rect x="852.6" y="75.6" width="6.6" height="6.8" rx="0.6" fill="#262626" stroke="#9e3b17" stroke-width="1"/>
<rect x="860.6" y="75.6" width="6.6" height="6.8" rx="0.6" fill="#262626" stroke="#9e3b17" stroke-width="1"/>
<rect x="852.6" y="83.8" width="6.6" height="6.8" rx="0.6" fill="#262626" stroke="#9e3b17" stroke-width="1"/>
<rect x="860.6" y="83.8" width="6.6" height="6.8" rx="0.6" fill="#262626" stroke="#9e3b17" stroke-width="1"/>
<rect x="911.3" y="72.4" width="21.8" height="21.6" fill="none" stroke="#bdbdbd" stroke-width="1"/>
<line x1="911.3" y1="76.7" x2="933.1" y2="76.7" stroke="#6a6a6a" stroke-width="0.6"/>
<line x1="911.3" y1="81.0" x2="933.1" y2="81.0" stroke="#6a6a6a" stroke-width="0.6"/>
<line x1="911.3" y1="85.30000000000001" x2="933.1" y2="85.30000000000001" stroke="#6a6a6a" stroke-width="0.6"/>
<line x1="911.3" y1="89.60000000000001" x2="933.1" y2="89.60000000000001" stroke="#6a6a6a" stroke-width="0.6"/>
<line x1="916.75" y1="72.4" x2="916.75" y2="94" stroke="#6a6a6a" stroke-width="0.6"/>
<line x1="922.1999999999999" y1="72.4" x2="922.1999999999999" y2="94" stroke="#6a6a6a" stroke-width="0.6"/>
<line x1="927.65" y1="72.4" x2="927.65" y2="94" stroke="#6a6a6a" stroke-width="0.6"/>
<circle cx="920.6" cy="81.6" r="5.6" fill="#282828" stroke="#d0d0d0" stroke-width="1.1"/>
<line x1="924.6" y1="85.6" x2="931" y2="92" stroke="#d0d0d0" stroke-width="1.3"/>
<rect x="917.6" y="80.4" width="1.8" height="4" fill="#cfcfcf"/><rect x="919.8" y="78.6" width="1.8" height="5.8" fill="#cfcfcf"/><rect x="922" y="79.4" width="1.8" height="5" fill="#3a8fd6"/>
<circle cx="48.8" cy="128.9" r="5" fill="#9a7a4c"/>
<path d="M47,127.1 L50.6,130.7 M50.6,127.1 L47,130.7" stroke="#faf3e0" stroke-width="1.1" stroke-linecap="round"/>
<path d="M950,147.4 L955,147.4 L952.5,151 Z" fill="#e8e8e8"/>
<path d="M89.2,145.8 L91.8,142.6 L94.4,145.8 Z M89.2,150 L91.8,153.2 L94.4,150 Z" fill="#cfcfcf"/>
<line x1="95.9" y1="139.5" x2="95.9" y2="157" stroke="#333" stroke-width="0.8"/>
<path d="M106.6,146.2 L112.4,152.2 M112.4,146.2 L106.6,152.2" stroke="#606060" stroke-width="1.3"/>
<path d="M125.4,148.8 L128.8,152.2 L134,146.6" fill="none" stroke="#606060" stroke-width="1.3"/>
<path d="M154.39999999999998,148.20000000000002 L156.2,150.6 L158.0,148.20000000000002" fill="none" stroke="#e6e6e6" stroke-width="1.35" stroke-linecap="round" stroke-linejoin="round"/>
<path d="M41.5,171 L51,171 L51,161.6 Z" fill="#5a5a5a"/>
<line x1="53" y1="184.73" x2="961" y2="184.73" stroke="#e2e2e2" stroke-width="0.9"/>
<line x1="38" y1="184.73" x2="53" y2="184.73" stroke="#3a3a3a" stroke-width="0.8"/>
<line x1="53" y1="195.56" x2="961" y2="195.56" stroke="#e2e2e2" stroke-width="0.9"/>
<line x1="38" y1="195.56" x2="53" y2="195.56" stroke="#3a3a3a" stroke-width="0.8"/>
<line x1="53" y1="206.39" x2="961" y2="206.39" stroke="#e2e2e2" stroke-width="0.9"/>
<line x1="38" y1="206.39" x2="53" y2="206.39" stroke="#3a3a3a" stroke-width="0.8"/>
<line x1="53" y1="217.22" x2="961" y2="217.22" stroke="#e2e2e2" stroke-width="0.9"/>
<line x1="38" y1="217.22" x2="53" y2="217.22" stroke="#3a3a3a" stroke-width="0.8"/>
<line x1="53" y1="228.05" x2="961" y2="228.05" stroke="#e2e2e2" stroke-width="0.9"/>
<line x1="38" y1="228.05" x2="53" y2="228.05" stroke="#3a3a3a" stroke-width="0.8"/>
<line x1="53" y1="238.88" x2="961" y2="238.88" stroke="#e2e2e2" stroke-width="0.9"/>
<line x1="38" y1="238.88" x2="53" y2="238.88" stroke="#3a3a3a" stroke-width="0.8"/>
<line x1="53" y1="249.71" x2="961" y2="249.71" stroke="#e2e2e2" stroke-width="0.9"/>
<line x1="38" y1="249.71" x2="53" y2="249.71" stroke="#3a3a3a" stroke-width="0.8"/>
<line x1="53" y1="260.54" x2="961" y2="260.54" stroke="#e2e2e2" stroke-width="0.9"/>
<line x1="38" y1="260.54" x2="53" y2="260.54" stroke="#3a3a3a" stroke-width="0.8"/>
<line x1="53" y1="271.37" x2="961" y2="271.37" stroke="#e2e2e2" stroke-width="0.9"/>
<line x1="38" y1="271.37" x2="53" y2="271.37" stroke="#3a3a3a" stroke-width="0.8"/>
<line x1="53" y1="282.20" x2="961" y2="282.20" stroke="#e2e2e2" stroke-width="0.9"/>
<line x1="38" y1="282.20" x2="53" y2="282.20" stroke="#3a3a3a" stroke-width="0.8"/>
<line x1="53" y1="293.03" x2="961" y2="293.03" stroke="#e2e2e2" stroke-width="0.9"/>
<line x1="38" y1="293.03" x2="53" y2="293.03" stroke="#3a3a3a" stroke-width="0.8"/>
<line x1="53" y1="303.86" x2="961" y2="303.86" stroke="#e2e2e2" stroke-width="0.9"/>
<line x1="38" y1="303.86" x2="53" y2="303.86" stroke="#3a3a3a" stroke-width="0.8"/>
<line x1="53" y1="314.69" x2="961" y2="314.69" stroke="#e2e2e2" stroke-width="0.9"/>
<line x1="38" y1="314.69" x2="53" y2="314.69" stroke="#3a3a3a" stroke-width="0.8"/>
<line x1="53" y1="325.52" x2="961" y2="325.52" stroke="#e2e2e2" stroke-width="0.9"/>
<line x1="38" y1="325.52" x2="53" y2="325.52" stroke="#3a3a3a" stroke-width="0.8"/>
<line x1="53" y1="336.35" x2="961" y2="336.35" stroke="#e2e2e2" stroke-width="0.9"/>
<line x1="38" y1="336.35" x2="53" y2="336.35" stroke="#3a3a3a" stroke-width="0.8"/>
<line x1="53" y1="347.18" x2="961" y2="347.18" stroke="#e2e2e2" stroke-width="0.9"/>
<line x1="38" y1="347.18" x2="53" y2="347.18" stroke="#3a3a3a" stroke-width="0.8"/>
<line x1="53" y1="358.01" x2="961" y2="358.01" stroke="#e2e2e2" stroke-width="0.9"/>
<line x1="38" y1="358.01" x2="53" y2="358.01" stroke="#3a3a3a" stroke-width="0.8"/>
<line x1="53" y1="368.84" x2="961" y2="368.84" stroke="#e2e2e2" stroke-width="0.9"/>
<line x1="38" y1="368.84" x2="53" y2="368.84" stroke="#3a3a3a" stroke-width="0.8"/>
<line x1="53" y1="379.67" x2="961" y2="379.67" stroke="#e2e2e2" stroke-width="0.9"/>
<line x1="38" y1="379.67" x2="53" y2="379.67" stroke="#3a3a3a" stroke-width="0.8"/>
<line x1="53" y1="390.50" x2="961" y2="390.50" stroke="#e2e2e2" stroke-width="0.9"/>
<line x1="38" y1="390.50" x2="53" y2="390.50" stroke="#3a3a3a" stroke-width="0.8"/>
<line x1="53" y1="401.33" x2="961" y2="401.33" stroke="#e2e2e2" stroke-width="0.9"/>
<line x1="38" y1="401.33" x2="53" y2="401.33" stroke="#3a3a3a" stroke-width="0.8"/>
<line x1="53" y1="412.16" x2="961" y2="412.16" stroke="#e2e2e2" stroke-width="0.9"/>
<line x1="38" y1="412.16" x2="53" y2="412.16" stroke="#3a3a3a" stroke-width="0.8"/>
<line x1="53" y1="422.99" x2="961" y2="422.99" stroke="#e2e2e2" stroke-width="0.9"/>
<line x1="38" y1="422.99" x2="53" y2="422.99" stroke="#3a3a3a" stroke-width="0.8"/>
<line x1="53" y1="433.82" x2="961" y2="433.82" stroke="#e2e2e2" stroke-width="0.9"/>
<line x1="38" y1="433.82" x2="53" y2="433.82" stroke="#3a3a3a" stroke-width="0.8"/>
<line x1="53" y1="444.65" x2="961" y2="444.65" stroke="#e2e2e2" stroke-width="0.9"/>
<line x1="38" y1="444.65" x2="53" y2="444.65" stroke="#3a3a3a" stroke-width="0.8"/>
<line x1="53" y1="455.48" x2="961" y2="455.48" stroke="#e2e2e2" stroke-width="0.9"/>
<line x1="38" y1="455.48" x2="53" y2="455.48" stroke="#3a3a3a" stroke-width="0.8"/>
<line x1="53" y1="466.31" x2="961" y2="466.31" stroke="#e2e2e2" stroke-width="0.9"/>
<line x1="38" y1="466.31" x2="53" y2="466.31" stroke="#3a3a3a" stroke-width="0.8"/>
<line x1="53" y1="477.14" x2="961" y2="477.14" stroke="#e2e2e2" stroke-width="0.9"/>
<line x1="38" y1="477.14" x2="53" y2="477.14" stroke="#3a3a3a" stroke-width="0.8"/>
<line x1="53" y1="487.97" x2="961" y2="487.97" stroke="#e2e2e2" stroke-width="0.9"/>
<line x1="38" y1="487.97" x2="53" y2="487.97" stroke="#3a3a3a" stroke-width="0.8"/>
<line x1="53" y1="498.80" x2="961" y2="498.80" stroke="#e2e2e2" stroke-width="0.9"/>
<line x1="38" y1="498.80" x2="53" y2="498.80" stroke="#3a3a3a" stroke-width="0.8"/>
<line x1="53" y1="509.63" x2="961" y2="509.63" stroke="#e2e2e2" stroke-width="0.9"/>
<line x1="38" y1="509.63" x2="53" y2="509.63" stroke="#3a3a3a" stroke-width="0.8"/>
<line x1="53" y1="520.46" x2="961" y2="520.46" stroke="#e2e2e2" stroke-width="0.9"/>
<line x1="38" y1="520.46" x2="53" y2="520.46" stroke="#3a3a3a" stroke-width="0.8"/>
<line x1="301.6" y1="173" x2="301.6" y2="529.2" stroke="#e2e2e2" stroke-width="0.9"/>
<line x1="301.6" y1="159" x2="301.6" y2="173" stroke="#464646" stroke-width="1.2"/>
<line x1="414.6" y1="173" x2="414.6" y2="529.2" stroke="#e2e2e2" stroke-width="0.9"/>
<line x1="414.6" y1="159" x2="414.6" y2="173" stroke="#464646" stroke-width="1.2"/>
<line x1="527.4" y1="173" x2="527.4" y2="529.2" stroke="#e2e2e2" stroke-width="0.9"/>
<line x1="527.4" y1="159" x2="527.4" y2="173" stroke="#464646" stroke-width="1.2"/>
<line x1="571.5" y1="173" x2="571.5" y2="529.2" stroke="#e2e2e2" stroke-width="0.9"/>
<line x1="571.5" y1="159" x2="571.5" y2="173" stroke="#464646" stroke-width="1.2"/>
<line x1="615.6" y1="173" x2="615.6" y2="529.2" stroke="#e2e2e2" stroke-width="0.9"/>
<line x1="615.6" y1="159" x2="615.6" y2="173" stroke="#464646" stroke-width="1.2"/>
<line x1="659.7" y1="173" x2="659.7" y2="529.2" stroke="#e2e2e2" stroke-width="0.9"/>
<line x1="659.7" y1="159" x2="659.7" y2="173" stroke="#464646" stroke-width="1.2"/>
<line x1="703.8" y1="173" x2="703.8" y2="529.2" stroke="#e2e2e2" stroke-width="0.9"/>
<line x1="703.8" y1="159" x2="703.8" y2="173" stroke="#464646" stroke-width="1.2"/>
<line x1="747.9" y1="173" x2="747.9" y2="529.2" stroke="#e2e2e2" stroke-width="0.9"/>
<line x1="747.9" y1="159" x2="747.9" y2="173" stroke="#464646" stroke-width="1.2"/>
<line x1="792.0" y1="173" x2="792.0" y2="529.2" stroke="#e2e2e2" stroke-width="0.9"/>
<line x1="792.0" y1="159" x2="792.0" y2="173" stroke="#464646" stroke-width="1.2"/>
<line x1="836.1" y1="173" x2="836.1" y2="529.2" stroke="#e2e2e2" stroke-width="0.9"/>
<line x1="836.1" y1="159" x2="836.1" y2="173" stroke="#464646" stroke-width="1.2"/>
<line x1="880.2" y1="173" x2="880.2" y2="529.2" stroke="#e2e2e2" stroke-width="0.9"/>
<line x1="880.2" y1="159" x2="880.2" y2="173" stroke="#464646" stroke-width="1.2"/>
<line x1="924.3" y1="173" x2="924.3" y2="529.2" stroke="#e2e2e2" stroke-width="0.9"/>
<line x1="924.3" y1="159" x2="924.3" y2="173" stroke="#464646" stroke-width="1.2"/>
<line x1="53" y1="159" x2="53" y2="173" stroke="#4a4a4a" stroke-width="0.9"/>
<rect x="52.9" y="173.5" width="248.4" height="11.4" fill="none" stroke="#217a47" stroke-width="1.4"/>
<rect x="299.4" y="183.0" width="3.6" height="3.6" fill="#217a47" stroke="#ffffff" stroke-width="0.6"/>
<path d="M52.6,534.4 L48.4,537.6 L52.6,540.8 Z" fill="#5a5a5a"/>
<path d="M64.8,534.4 L69,537.6 L64.8,540.8 Z" fill="#5a5a5a"/>
<path d="M194.8,537.6 L202.4,537.6 M198.6,533.8 L198.6,541.4" stroke="#d8d8d8" stroke-width="1.2"/>
<line x1="211.2" y1="531" x2="211.2" y2="544" stroke="#444" stroke-width="0.9"/>
<circle cx="89.4" cy="552.5" r="1.3" fill="none" stroke="#e0e0e0" stroke-width="0.9"/>
<circle cx="86.3" cy="553.4" r="1.2" fill="none" stroke="#e0e0e0" stroke-width="0.9"/>
<circle cx="92.5" cy="553.4" r="1.2" fill="none" stroke="#e0e0e0" stroke-width="0.9"/>
<path d="M87.4,554.2 Q89.4,555.4 91.4,554.2 M88,555 Q87.2,557.6 87.6,559.6 Q87.8,561.2 88.6,561.2" fill="none" stroke="#e0e0e0" stroke-width="0.9"/>
<circle cx="91.8" cy="559.4" r="2.8" fill="#efefef"/>
<path d="M90.9,558.5 Q91,557.4 91.9,557.5 Q92.8,557.7 92.6,558.6 Q92.4,559.2 91.8,559.5 L91.8,560.2" fill="none" stroke="#333" stroke-width="0.6"/>
<circle cx="91.8" cy="561.1" r="0.35" fill="#333"/>
<rect x="749.6" y="551.6" width="2.9" height="2.7" fill="#f0f0f0"/>
<rect x="749.6" y="554.9" width="2.9" height="2.7" fill="#f0f0f0"/>
<rect x="749.6" y="558.2" width="2.9" height="2.7" fill="#f0f0f0"/>
<rect x="753.2" y="551.6" width="2.9" height="2.7" fill="#f0f0f0"/>
<rect x="753.2" y="554.9" width="2.9" height="2.7" fill="#f0f0f0"/>
<rect x="753.2" y="558.2" width="2.9" height="2.7" fill="#f0f0f0"/>
<rect x="756.8000000000001" y="551.6" width="2.9" height="2.7" fill="#f0f0f0"/>
<rect x="756.8000000000001" y="554.9" width="2.9" height="2.7" fill="#f0f0f0"/>
<rect x="756.8000000000001" y="558.2" width="2.9" height="2.7" fill="#f0f0f0"/>
<path d="M775.2,551.2 L780.4,551.2 L782.8,553.6 L782.8,561.4 L775.2,561.4 Z" fill="none" stroke="#cfcfcf" stroke-width="0.9"/>
<rect x="777.4" y="555.4" width="3.4" height="4" fill="none" stroke="#cfcfcf" stroke-width="0.7"/>
<path d="M798.4,551 L798.4,553.2 L807.6,553.2 L807.6,551 M798.4,562 L798.4,559.8 L807.6,559.8 L807.6,562 M797.6,556.5 L799.6,556.5 M801.6,556.5 L804.4,556.5 M806.4,556.5 L808.4,556.5" fill="none" stroke="#cfcfcf" stroke-width="0.9"/>
<line x1="821" y1="556.6" x2="826" y2="556.6" stroke="#d8d8d8" stroke-width="1.2"/>
<line x1="832.4" y1="556.6" x2="897.6" y2="556.6" stroke="#6e6e6e" stroke-width="2.8" stroke-linecap="round"/>
<circle cx="864.6" cy="556.6" r="5.3" fill="#a4a4a4"/>
<path d="M903.2,556.6 L909.2,556.6 M906.2,553.6 L906.2,559.6" stroke="#dcdcdc" stroke-width="1.2"/>
</svg>
</body></html>
